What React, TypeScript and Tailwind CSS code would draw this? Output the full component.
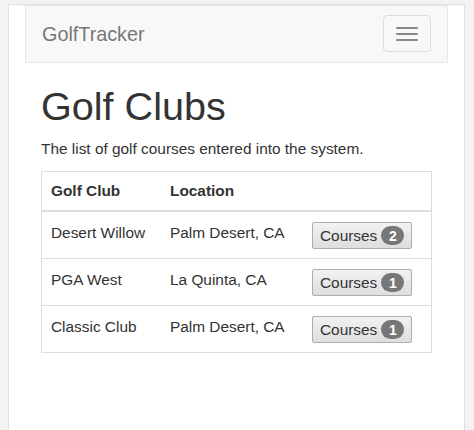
import React from "react";

const rows = [
  { club: "Desert Willow", loc: "Palm Desert, CA", n: 2 },
  { club: "PGA West", loc: "La Quinta, CA", n: 1 },
  { club: "Classic Club", loc: "Palm Desert, CA", n: 1 },
];

export default function App() {
  return (
    <div className="w-[474px] h-[430px] bg-[#f3f3f3] pt-[4px] pl-[8px] pr-[9px] overflow-hidden text-[#333] text-[15.4px] leading-[22px]" style={{ fontFamily: '"Liberation Sans", Arial, sans-serif' }}>
      <div className="h-[440px] bg-white border border-[#e0e0e0] px-[16px]">
        <div className="h-[58px] bg-[#f8f8f8] border border-[#e7e7e7] flex items-center justify-between pl-[16px] pr-[16px]">
          <span className="text-[19.8px] text-[#777]">GolfTracker</span>
          <div className="w-[48px] h-[37px] border border-[#ddd] rounded-[4px] flex flex-col items-center justify-center gap-[4px] -mt-[1px]">
            <span className="block w-[22px] h-[2px] bg-[#888] rounded-[1px]" />
            <span className="block w-[22px] h-[2px] bg-[#888] rounded-[1px]" />
            <span className="block w-[22px] h-[2px] bg-[#888] rounded-[1px]" />
          </div>
        </div>
        <div className="px-[16px]">
          <h1 className="text-[39.6px] leading-[44px] mt-[21px] text-[#333]">Golf Clubs</h1>
          <p className="mt-[10px] mb-[11px]">The list of golf courses entered into the system.</p>
          <div className="border border-[#ddd]">
            <div className="h-[38px] flex items-center font-bold border-b-2 border-[#ddd] box-content">
              <div className="w-[119px] pl-[9px]">Golf Club</div>
              <div className="w-[143px] pl-[9px]">Location</div>
            </div>
            {rows.map((r, i) => (
              <div key={r.club} className={"h-[46px] flex items-start box-content" + (i > 0 ? " border-t border-[#ddd]" : "")}>
                <div className="w-[119px] pl-[9px] pt-[10px]">{r.club}</div>
                <div className="w-[143px] pl-[9px] pt-[10px]">{r.loc}</div>
                <div className="pl-[8px] pt-[10px]">
                  <div className="w-[100px] h-[27px] border border-[#adadad] rounded-[2px] bg-gradient-to-b from-[#f2f2f2] to-[#dedede] flex items-center pl-[7px] gap-[4px]">
                    <span className="text-[15.4px] text-[#333]">Courses</span>
                    <span className="w-[23px] h-[19px] rounded-full bg-[#777] text-white text-[14px] font-bold flex items-center justify-center leading-none">{r.n}</span>
                  </div>
                </div>
              </div>
            ))}
          </div>
        </div>
      </div>
    </div>
  );
}
